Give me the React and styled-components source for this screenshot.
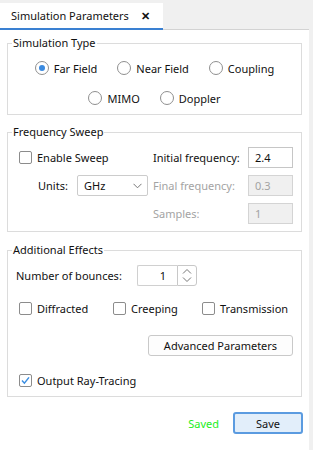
import React from "react";
import styled, { createGlobalStyle, css } from "styled-components";

const GlobalStyle = createGlobalStyle`
  html, body {
    margin: 0;
    padding: 0;
    background: #f0f0f0;
  }
  body {
    font-family: "Noto Sans", "Liberation Sans", sans-serif;
    font-size: 11px;
    color: #111;
  }
`;

const Window = styled.div`
  width: 313px;
  height: 450px;
  display: flex;
  flex-direction: column;
  background: #f0f0f0;
`;

const TabBar = styled.div`
  width: 309px;
  height: 30px;
  box-sizing: border-box;
  padding-top: 3px;
  display: flex;
  align-items: stretch;
  border-bottom: 1px solid #d3d3d3;
`;

const Tab = styled.div`
  width: 163px;
  box-sizing: border-box;
  display: flex;
  align-items: center;
  gap: 12px;
  padding-left: 11px;
  background: #fff;
  border-bottom: 2px solid #3a80d2;
  margin-bottom: -1px;
  white-space: nowrap;
`;

const Close = styled.span`
  font-weight: bold;
  font-size: 11px;
`;

const Panel = styled.div`
  flex: 1;
  width: 309px;
  background: #fff;
  padding-top: 5px;
  display: flex;
  flex-direction: column;
`;

const Group = styled.fieldset`
  margin: ${(p) => p.$top || 0}px 7px 0;
  padding: ${(p) => p.$pad || "7px 8px 6px"};
  border: 1px solid #dcdcdc;
  min-width: 0;
`;

const Legend = styled.legend`
  margin-left: -4px;
  padding: 0 1px;
  line-height: 16px;
`;

const RadioRow = styled.div`
  display: flex;
  justify-content: center;
  gap: 20px;
  height: 20px;
  align-items: center;
  margin-top: ${(p) => p.$top || 0}px;
`;

const Option = styled.label`
  display: flex;
  align-items: center;
  gap: 5px;
  white-space: nowrap;
  color: ${(p) => (p.$disabled ? "#a3a3a3" : "inherit")};
`;

const RadioDot = styled.span`
  width: 14px;
  height: 14px;
  box-sizing: border-box;
  border-radius: 50%;
  border: 1px solid #8f8f8f;
  background: #fff;
  display: flex;
  align-items: center;
  justify-content: center;
  ${(p) =>
    p.$on &&
    css`
      &::after {
        content: "";
        width: 6px;
        height: 6px;
        border-radius: 50%;
        background: #3a8ae0;
      }
    `}
`;

const Box = styled.span`
  width: 13px;
  height: 13px;
  box-sizing: border-box;
  border-radius: 2px;
  border: 1px solid #8c8c8c;
  background: #fff;
  display: flex;
  align-items: center;
  justify-content: center;
`;

const SweepGrid = styled.div`
  display: grid;
  grid-template-columns: 134px 95px 45px;
  grid-auto-rows: 21px;
  row-gap: 7px;
  align-items: center;
  padding-left: 3px;
`;

const UnitsCell = styled.div`
  display: flex;
  align-items: center;
  padding-left: 19px;
`;

const UnitsLabel = styled.span`
  width: 39px;
`;

const Select = styled.div`
  width: 71px;
  height: 21px;
  box-sizing: border-box;
  border: 1px solid #cccccc;
  border-radius: 2px;
  display: flex;
  align-items: center;
  justify-content: space-between;
  padding: 0 5px 0 6px;
`;

const FieldLabel = styled.span`
  color: ${(p) => (p.$disabled ? "#a3a3a3" : "inherit")};
  white-space: nowrap;
`;

const Input = styled.div`
  height: 21px;
  box-sizing: border-box;
  border: 1px solid ${(p) => (p.$disabled ? "#d4d4d4" : "#c6c6c6")};
  background: ${(p) => (p.$disabled ? "#f0f0f0" : "#fff")};
  color: ${(p) => (p.$disabled ? "#a3a3a3" : "inherit")};
  display: flex;
  align-items: center;
  padding-left: 6px;
`;

const Row = styled.div`
  display: flex;
  align-items: center;
  height: ${(p) => p.$h || 20}px;
  margin-top: ${(p) => p.$top || 0}px;
  padding-left: ${(p) => p.$indent || 0}px;
  justify-content: ${(p) => p.$justify || "flex-start"};
`;

const BounceLabel = styled.span`
  width: 121px;
`;

const Spin = styled.div`
  display: flex;
  width: 60px;
  height: 21px;
`;

const SpinValue = styled.div`
  flex: 1;
  box-sizing: border-box;
  border: 1px solid #d0d0d0;
  border-right: none;
  border-radius: 2px 0 0 2px;
  display: flex;
  align-items: center;
  justify-content: flex-end;
  padding-right: 11px;
`;

const SpinButton = styled.div`
  width: 20px;
  box-sizing: border-box;
  border: 1px solid #c8c8c8;
  border-radius: 0 3px 3px 0;
  display: flex;
  align-items: center;
  justify-content: center;
`;

const EffectsRow = styled.div`
  display: grid;
  grid-template-columns: 94px 89px auto;
  height: 20px;
  align-items: center;
  margin-top: 12px;
  padding-left: 3px;
`;

const Button = styled.button`
  font: inherit;
  color: inherit;
  height: ${(p) => (p.$primary ? 22 : 21)}px;
  width: ${(p) => p.$w}px;
  box-sizing: border-box;
  padding: 0;
  border-radius: 3px;
  border: ${(p) => (p.$primary ? "2px solid #5b9be0" : "1px solid #c9c9c9")};
  background: ${(p) => (p.$primary ? "#e2eefa" : "#fdfdfd")};
`;

const Footer = styled.div`
  display: flex;
  align-items: center;
  justify-content: flex-end;
  gap: 14px;
  margin-top: 15px;
  padding-right: 6px;
`;

const Saved = styled.span`
  color: #22ee22;
`;

function Radio({ label, on }) {
  return (
    <Option>
      <RadioDot $on={on} />
      {label}
    </Option>
  );
}

function Check({ label, on }) {
  return (
    <Option>
      <Box>
        {on && (
          <svg width="11" height="11" viewBox="0 0 11 11">
            <path d="M2 5.6 L4.4 8.2 L9 2.4" fill="none" stroke="#3b8ee2" strokeWidth="1.5" />
          </svg>
        )}
      </Box>
      {label}
    </Option>
  );
}

export default function App() {
  return (
    <Window>
      <GlobalStyle />
      <TabBar>
        <Tab>
          Simulation Parameters <Close>✕</Close>
        </Tab>
      </TabBar>
      <Panel>
        <Group $pad="7px 8px 6px">
          <Legend>Simulation Type</Legend>
          <RadioRow>
            <Radio label="Far Field" on />
            <Radio label="Near Field" />
            <Radio label="Coupling" />
          </RadioRow>
          <RadioRow $top={10}>
            <Radio label="MIMO" />
            <Radio label="Doppler" />
          </RadioRow>
        </Group>

        <Group $top={9} $pad="7px 8px 7px 8px">
          <Legend>Frequency Sweep</Legend>
          <SweepGrid>
            <Check label="Enable Sweep" />
            <FieldLabel>Initial frequency:</FieldLabel>
            <Input>2.4</Input>
            <UnitsCell>
              <UnitsLabel>Units:</UnitsLabel>
              <Select>
                GHz
                <svg width="9" height="6" viewBox="0 0 9 6">
                  <path d="M0.5 0.8 L4.5 4.8 L8.5 0.8" fill="none" stroke="#777" strokeWidth="1" />
                </svg>
              </Select>
            </UnitsCell>
            <FieldLabel $disabled>Final frequency:</FieldLabel>
            <Input $disabled>0.3</Input>
            <span />
            <FieldLabel $disabled>Samples:</FieldLabel>
            <Input $disabled>1</Input>
          </SweepGrid>
        </Group>

        <Group $top={10} $pad="7px 8px 6px">
          <Legend>Additional Effects</Legend>
          <Row $h={21}>
            <BounceLabel>Number of bounces:</BounceLabel>
            <Spin>
              <SpinValue>1</SpinValue>
              <SpinButton>
                <svg width="10" height="15" viewBox="0 0 10 15">
                  <path d="M1 5.5 L5 1.5 L9 5.5 M1 9.5 L5 13.5 L9 9.5" fill="none" stroke="#777" strokeWidth="1" />
                </svg>
              </SpinButton>
            </Spin>
          </Row>
          <EffectsRow>
            <Check label="Diffracted" />
            <Check label="Creeping" />
            <Check label="Transmission" />
          </EffectsRow>
          <Row $h={21} $top={17} $justify="flex-end">
            <Button $w={145}>Advanced Parameters</Button>
          </Row>
          <Row $top={14} $indent={3}>
            <Check label="Output Ray-Tracing" on />
          </Row>
        </Group>

        <Footer>
          <Saved>Saved</Saved>
          <Button $primary $w={70}>Save</Button>
        </Footer>
      </Panel>
    </Window>
  );
}
